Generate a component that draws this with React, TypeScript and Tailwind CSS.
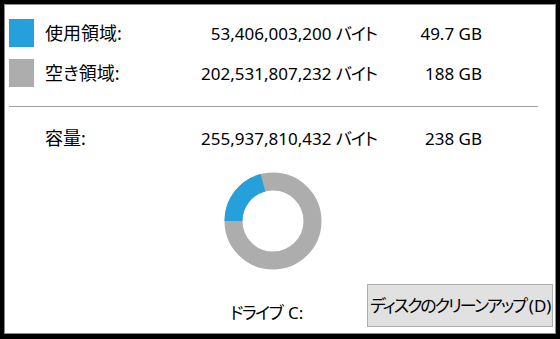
import React from "react";

const font = "font-['Noto_Sans','Noto_Sans_CJK_JP',sans-serif] [font-feature-settings:'palt']";

function Row({ color, label, bytes, gb }: { color?: string; label: string; bytes: string; gb: string }) {
  return (
    <div className="flex h-[28px] items-center">
      <div className={`h-[28px] w-[25px] shrink-0 ${color ?? ""}`} />
      <div className="ml-[11px] w-[120px] shrink-0 leading-none">{label}</div>
      <div className="w-[212px] shrink-0 text-right text-[17px] leading-none whitespace-nowrap">
        {bytes} <span className="tracking-[-1px]">バイト</span>
      </div>
      <div className="w-[105px] shrink-0 text-right text-[17px] leading-none whitespace-nowrap">{gb}</div>
    </div>
  );
}

function Donut() {
  const r = 39.5;
  const c = 2 * Math.PI * r;
  const used = 53406003200 / 255937810432;
  return (
    <svg width="98" height="98" viewBox="0 0 98 98">
      <circle cx="49" cy="49" r={r} fill="none" stroke="#adadad" strokeWidth="18" />
      <circle
        cx="49"
        cy="49"
        r={r}
        fill="none"
        stroke="#26a0da"
        strokeWidth="18"
        strokeDasharray={`${used * c} ${c}`}
        transform="rotate(180 49 49)"
      />
    </svg>
  );
}

export default function App() {
  return (
    <div className={`h-[339px] w-[560px] bg-black p-[4px] text-[18px] text-black ${font}`}>
      <div className="flex h-[330px] flex-col border border-[#8c8c8c] bg-white pl-[4px] pt-[14px]">
        <Row color="bg-[#26a0da]" label="使用領域:" bytes="53,406,003,200" gb="49.7 GB" />
        <div className="mt-[12px]">
          <Row color="bg-[#adadad]" label="空き領域:" bytes="202,531,807,232" gb="188 GB" />
        </div>
        <div className="mt-[19px] h-px w-[529px] bg-[#a0a0a0]" />
        <div className="mt-[17px]">
          <Row label="容量:" bytes="255,937,810,432" gb="238 GB" />
        </div>
        <div className="mt-[20px] flex items-start">
          <div className="ml-[215px] flex w-[98px] shrink-0 flex-col">
            <Donut />
            <div className="ml-[6px] mt-[30px] flex h-[24px] items-center whitespace-nowrap text-[17px] leading-none">
              <span className="tracking-[-1.5px]">ドライブ</span>
              <span className="ml-[6px]">C:</span>
            </div>
          </div>
          <button className="ml-[45px] mt-[112px] flex h-[43px] w-[186px] shrink-0 items-center overflow-hidden whitespace-nowrap border border-[#adadad] bg-[#e1e1e1] pl-[2px] text-[17px] leading-none text-black">
            <span className="tracking-[-2px]">ディスクのクリーンアップ</span>
            <span className="ml-[3px]">(D)</span>
          </button>
        </div>
      </div>
    </div>
  );
}
